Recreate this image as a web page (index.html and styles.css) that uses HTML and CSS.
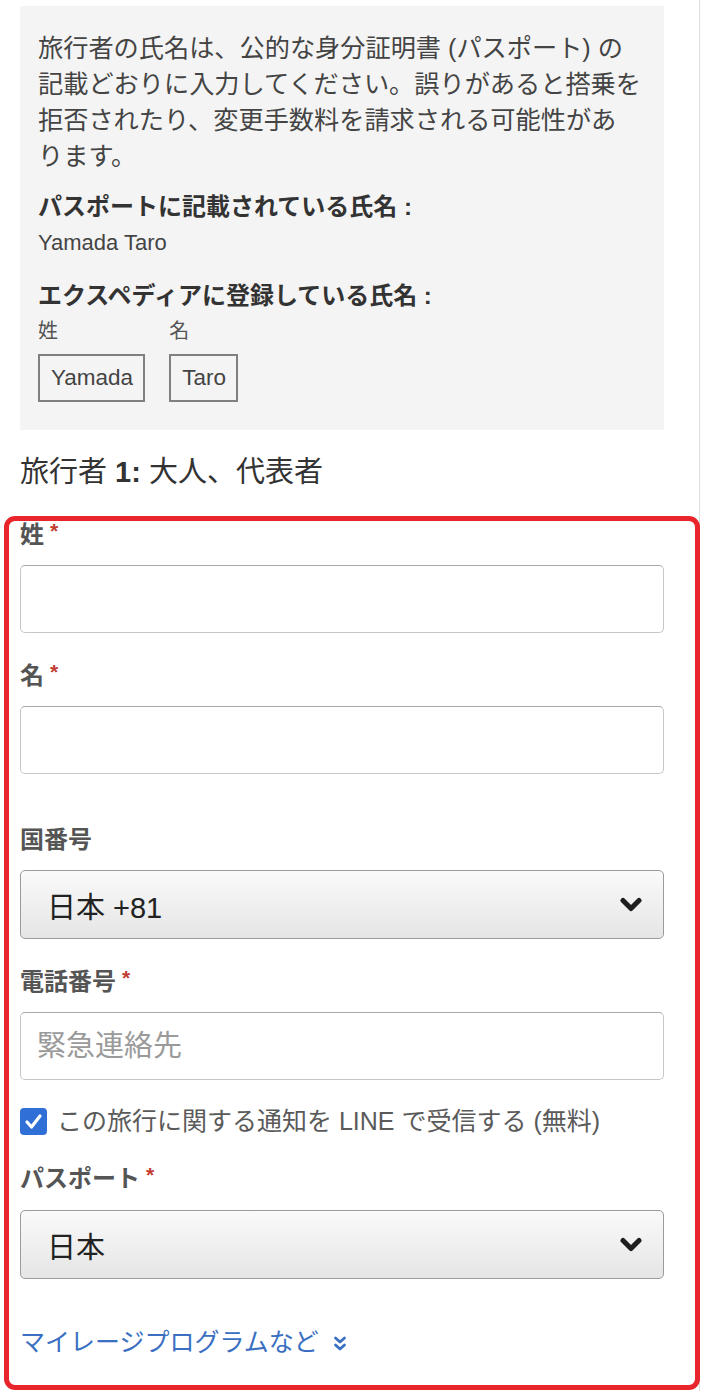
FILE: index.html
```html
<!DOCTYPE html>
<html lang="ja">
<head>
<meta charset="utf-8">
<title>旅行者情報</title>
<link rel="stylesheet" href="styles.css">
</head>
<body>
<div class="page">
  <div class="notice">
    <p class="notice-text">旅行者の氏名は、公的な身分証明書 (パスポート) の記載どおりに入力してください。誤りがあると搭乗を拒否されたり、変更手数料を請求される可能性があ<br>ります。</p>
    <h3 class="notice-head">パスポートに記載されている氏名 :</h3>
    <p class="notice-name">Yamada Taro</p>
    <h3 class="notice-head notice-head-2">エクスペディアに登録している氏名 :</h3>
    <div class="name-cols">
      <div class="name-col">
        <span class="name-label">姓</span>
        <span class="name-box">Yamada</span>
      </div>
      <div class="name-col">
        <span class="name-label">名</span>
        <span class="name-box">Taro</span>
      </div>
    </div>
  </div>

  <h2 class="traveler">旅行者 <b>1:</b> 大人、代表者</h2>

  <div class="form">
    <label class="label first">姓<span class="req">*</span></label>
    <input class="field" type="text">

    <label class="label">名<span class="req">*</span></label>
    <input class="field" type="text">

    <label class="label label-country">国番号</label>
    <div class="select">
      <span>日本 +81</span>
      <svg class="chev" width="24" height="16" viewBox="0 0 24 16"><polyline points="4,3.5 12,11.5 20,3.5" fill="none" stroke="#1e1e1e" stroke-width="5" stroke-linecap="round" stroke-linejoin="round"/></svg>
    </div>

    <label class="label">電話番号<span class="req">*</span></label>
    <input class="field" type="text" placeholder="緊急連絡先">

    <div class="check-row">
      <span class="checkbox"><svg width="27" height="27" viewBox="0 0 27 27"><polyline points="7,14 11.5,19 20,8" fill="none" stroke="#fff" stroke-width="3.2" stroke-linecap="round" stroke-linejoin="round"/></svg></span>
      <span class="check-text">この旅行に関する通知を LINE で受信する (無料)</span>
    </div>

    <label class="label label-passport">パスポート<span class="req">*</span></label>
    <div class="select select-passport">
      <span>日本</span>
      <svg class="chev" width="24" height="16" viewBox="0 0 24 16"><polyline points="4,3.5 12,11.5 20,3.5" fill="none" stroke="#1e1e1e" stroke-width="5" stroke-linecap="round" stroke-linejoin="round"/></svg>
    </div>

    <a class="more" href="#">マイレージプログラムなど <svg class="dchev" width="14" height="18" viewBox="0 0 14 18"><polyline points="2.5,3 7,7 11.5,3" fill="none" stroke="#3a6fc2" stroke-width="2.8" stroke-linecap="round" stroke-linejoin="round"/><polyline points="2.5,10 7,14 11.5,10" fill="none" stroke="#3a6fc2" stroke-width="2.8" stroke-linecap="round" stroke-linejoin="round"/></svg></a>
  </div>
</div>
</body>
</html>
```

FILE: styles.css
```css
* { box-sizing: border-box; }

html, body {
  margin: 0;
  padding: 0;
  background: #fff;
}

body {
  font-family: "Liberation Sans", "Noto Sans CJK JP", sans-serif;
  color: #333;
}

.page {
  width: 700px;
  padding-top: 6px;
  padding-bottom: 3px;
  border-right: 1px solid #dedede;
}

.notice {
  margin-left: 20px;
  width: 644px;
  background: #f4f4f4;
  padding: 24px 18px 28px 18px;
}

.notice-text {
  margin: 0;
  font-size: 25.2px;
  line-height: 36px;
  color: #444;
}

.notice-head {
  margin: 16px 0 0;
  font-size: 24px;
  line-height: 34px;
  font-weight: bold;
  color: #333;
}

.notice-head-2 {
  margin-top: 21px;
}

.notice-name {
  margin: 4px 0 0;
  font-size: 22px;
  line-height: 30px;
  color: #444;
}

.name-cols {
  display: flex;
  gap: 24px;
  margin-top: 5px;
}

.name-col {
  display: flex;
  flex-direction: column;
  align-items: flex-start;
}

.name-label {
  font-size: 20px;
  line-height: 26px;
  color: #555;
}

.name-box {
  margin-top: 10px;
  height: 48px;
  display: flex;
  align-items: center;
  padding: 0 10px 0 11px;
  border: 2px solid #808080;
  font-size: 22.5px;
  color: #444;
}

.traveler {
  margin: 22px 0 0 20px;
  font-size: 29px;
  line-height: 40px;
  font-weight: normal;
  color: #333;
}

.traveler b {
  font-weight: bold;
}

.form {
  margin: 24px 0 0 4px;
  width: 696px;
  border: 5px solid #e7252b;
  border-radius: 11px;
  padding: 0 31px 29px 11px;
  display: flex;
  flex-direction: column;
  align-items: stretch;
}

.label {
  display: block;
  margin-top: 29px;
  font-size: 24px;
  line-height: 28px;
  font-weight: bold;
  color: #555;
}

.label.first {
  margin-top: 0;
}

.label-country {
  margin-top: 52px;
}

.label-passport {
  margin-top: 29px;
}

.req {
  display: inline-block;
  margin-left: 6px;
  font-size: 21px;
  line-height: 17px;
  color: #c23b30;
  vertical-align: 5px;
}

.field {
  display: block;
  margin: 16px 0 0;
  width: 100%;
  height: 68px;
  border: 1px solid #c6c6c6;
  border-top-color: #a9a9a9;
  border-radius: 5px;
  background: #fff;
  padding: 0 16px;
  font-family: "Liberation Sans", "Noto Sans CJK JP", sans-serif;
  font-size: 29px;
  color: #333;
  -webkit-appearance: none;
  appearance: none;
  outline: none;
}

.field::placeholder {
  color: #9a9a9a;
}

.select {
  margin-top: 16px;
  height: 69px;
  display: flex;
  align-items: center;
  justify-content: space-between;
  padding: 0 20px 0 26px;
  border: 1px solid #9b9b9b;
  border-radius: 5px;
  background: linear-gradient(#fafafa, #e5e5e5);
  font-size: 29px;
  color: #222;
}

.select-passport {
  margin-top: 17px;
}

.chev {
  display: block;
}

.check-row {
  margin-top: 26px;
  display: flex;
  align-items: center;
  gap: 10px;
}

.checkbox {
  width: 27px;
  height: 27px;
  border-radius: 4px;
  background: #2f6fd6;
  display: block;
  flex: none;
}

.checkbox svg {
  display: block;
}

.check-text {
  font-size: 25px;
  line-height: 30px;
  color: #5a5a5a;
}

.more {
  margin-top: 49px;
  display: flex;
  align-items: center;
  gap: 14px;
  font-size: 25px;
  line-height: 28px;
  color: #3a6fc2;
  text-decoration: none;
}

.dchev {
  display: block;
  margin-top: 3px;
}
```
